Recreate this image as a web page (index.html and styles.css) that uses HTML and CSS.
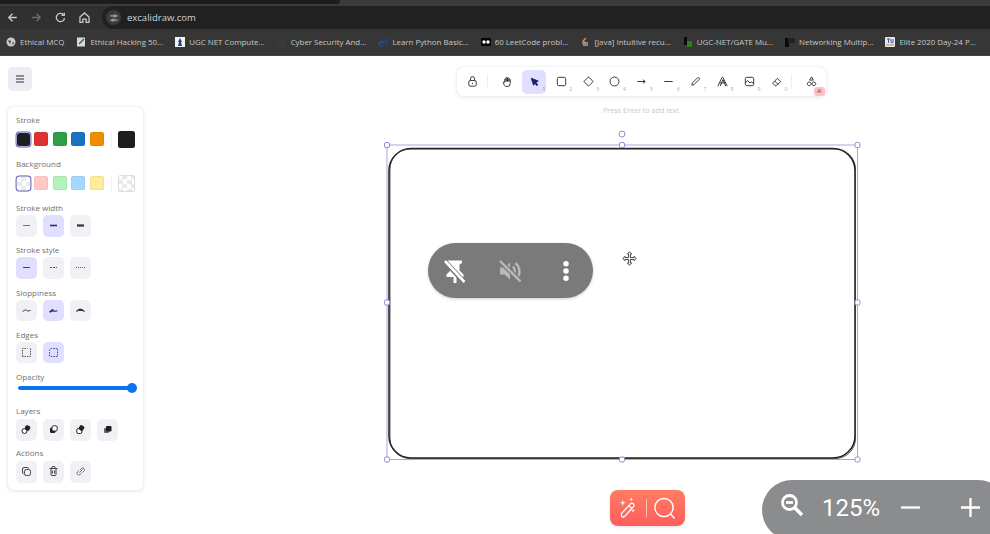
FILE: index.html
```html
<!DOCTYPE html>
<html lang="en">
<head>
<meta charset="utf-8">
<title>excalidraw.com</title>
<link rel="stylesheet" href="styles.css">
</head>
<body>
<div class="browser">
  <div class="tabstrip"><div class="tabstrip-dark"></div></div>
  <div class="toolbar-row">
    <div class="nav">
      <svg class="nav-icon" viewBox="0 0 12 12"><path d="M10 6H2.500M6 2.500 2.500 6 6 9.500"/></svg>
      <svg class="nav-icon dim" viewBox="0 0 12 12"><path d="M2 6h7.500M6 2.500 9.500 6 6 9.500"/></svg>
      <svg class="nav-icon" viewBox="0 0 12 12"><path d="M9.700 6.500A3.800 3.800 0 1 1 8.600 3.300M9.500 1.500v2.500H7"/></svg>
      <svg class="nav-icon" viewBox="0 0 12 12"><path d="M1.800 5.500 6 1.800l4.200 3.700v5H7.500V7.500h-3v3H1.800z"/></svg>
    </div>
    <div class="address">
      <span class="site-chip"><svg viewBox="0 0 12 12"><path d="M1.500 3.500h4M8.500 3.500h2M1.500 8.500h2M6.500 8.500h4"/><circle cx="7" cy="3.500" r="1.300"/><circle cx="5" cy="8.500" r="1.300"/></svg></span>
      <span class="url">excalidraw.com</span>
    </div>
  </div>
  <div class="bookmarks">
    <span class="bm"><svg class="fav" viewBox="0 0 10 10"><circle cx="5" cy="5" r="4.500" fill="#c9c9c9"/><path d="M2 3l3 1-1 3zM6 6l2-1-1 3z" fill="#444"/></svg>Ethical MCQ</span>
    <span class="bm"><svg class="fav" viewBox="0 0 10 10"><rect x="1" y="0.500" width="8" height="9" fill="#d8d8d8"/><path d="M3 7 8 2" stroke="#555" stroke-width="1.500"/></svg>Ethical Hacking 50...</span>
    <span class="bm"><svg class="fav" viewBox="0 0 10 10"><rect width="10" height="10" fill="#f2f2f2"/><path d="M5 1 3 5h1L3 9h4L6 5h1z" fill="#23408e"/></svg>UGC NET Compute...</span>
    <span class="bm"><svg class="fav" viewBox="0 0 10 10"><path d="M2 3h5v7H3a2 2 0 0 1-1-4h5" fill="none" stroke="#3c3c3c" stroke-width="1.500"/></svg>Cyber Security And...</span>
    <span class="bm"><svg class="fav" viewBox="0 0 10 10"><path d="M1 6h5a2.500 2.500 0 1 0-1 2.500" fill="none" stroke="#1d4f91" stroke-width="1.500"/><path d="M8.500 1v6M8.500 8.500v1" stroke="#1d4f91"/></svg>Learn Python Basic...</span>
    <span class="bm"><svg class="fav" viewBox="0 0 10 10"><rect y="1" width="10" height="8" rx="1" fill="#050505"/><circle cx="3" cy="5" r="1.700" fill="#fff"/><circle cx="7" cy="5" r="1.700" fill="#fff"/></svg>60 LeetCode probl...</span>
    <span class="bm"><svg class="fav" viewBox="0 0 10 10"><path d="M2 6h6M3 8h5" stroke="#ddd"/><path d="M6 1 3 4l3 2" fill="none" stroke="#e09a2c" stroke-width="1.200"/></svg>[Java] Intuitive recu...</span>
    <span class="bm"><svg class="fav" viewBox="0 0 10 10"><rect x="1" width="3" height="8" fill="#0c0c0c"/><rect x="4" y="4" width="5" height="6" fill="#2f7d18"/></svg>UGC-NET/GATE Mu...</span>
    <span class="bm"><svg class="fav" viewBox="0 0 10 10"><rect x="0" y="1" width="4" height="9" fill="#0a0a0a"/><rect x="3" y="1" width="7" height="5" fill="#222"/></svg>Networking Multip...</span>
    <span class="bm"><svg class="fav" viewBox="0 0 10 10"><rect width="10" height="10" rx="1" fill="#e8e8e8"/><path d="M2 2h3M3.500 2v4M6 2v3a1 1 0 0 0 2 0V2" fill="none" stroke="#3b5bb5"/><path d="M1 8h8" stroke="#d0852c"/></svg>Elite 2020 Day-24 P...</span>
  </div>
</div>

<main class="canvas">
  <button class="menu-btn" type="button" aria-label="Menu">
    <svg viewBox="0 0 12 12"><path d="M2 3h8M2 6h8M2 9h8"/></svg>
  </button>

  <aside class="panel">
    <section class="group">
      <h3>Stroke</h3>
      <div class="swatches">
        <span class="sw sel" style="--c:#1e1e1e"></span>
        <span class="sw" style="--c:#e03131"></span>
        <span class="sw" style="--c:#2f9e44"></span>
        <span class="sw" style="--c:#1971c2"></span>
        <span class="sw" style="--c:#f08c00"></span>
        <span class="sep"></span>
        <span class="sw big" style="--c:#1e1e1e"></span>
      </div>
    </section>
    <section class="group">
      <h3>Background</h3>
      <div class="swatches">
        <span class="sw sel checker"></span>
        <span class="sw" style="--c:#ffc9c9"></span>
        <span class="sw" style="--c:#b2f2bb"></span>
        <span class="sw" style="--c:#a5d8ff"></span>
        <span class="sw" style="--c:#ffec99"></span>
        <span class="sep"></span>
        <span class="sw big checker"></span>
      </div>
    </section>
    <section class="group">
      <h3>Stroke width</h3>
      <div class="btns">
        <span class="opt"><svg viewBox="0 0 21 21"><path d="M7 10.500h7" stroke="#777" stroke-width="1"/></svg></span>
        <span class="opt on"><svg viewBox="0 0 21 21"><path d="M7 10.500h7" stroke="#2a2a7a" stroke-width="1.600"/></svg></span>
        <span class="opt"><svg viewBox="0 0 21 21"><path d="M7 10.500h7" stroke="#333" stroke-width="2.200"/></svg></span>
      </div>
    </section>
    <section class="group">
      <h3>Stroke style</h3>
      <div class="btns">
        <span class="opt on"><svg viewBox="0 0 21 21"><path d="M7 10.500h7" stroke="#3a3a8a" stroke-width="1"/></svg></span>
        <span class="opt"><svg viewBox="0 0 21 21"><path d="M7 10.500h7" stroke="#555" stroke-width="1" stroke-dasharray="2 1"/></svg></span>
        <span class="opt"><svg viewBox="0 0 21 21"><path d="M6 10.500h9" stroke="#555" stroke-width=".9" stroke-dasharray="1 1"/></svg></span>
      </div>
    </section>
    <section class="group">
      <h3>Sloppiness</h3>
      <div class="btns">
        <span class="opt"><svg viewBox="0 0 21 21"><path d="M6.500 11.500 9.500 9.700 11.500 11 14.500 10.500" fill="none" stroke="#333" stroke-width=".9"/></svg></span>
        <span class="opt on"><svg viewBox="0 0 21 21"><path d="M6.500 12 9.500 9.500 11 11.300 14.500 10.700M7 12.300 10 10.500" fill="none" stroke="#2a2a7a" stroke-width="1.100"/></svg></span>
        <span class="opt"><svg viewBox="0 0 21 21"><path d="M6.500 11.500 9 9.500 11.500 9.500 14.500 11.500M9 10.300h3" fill="none" stroke="#333" stroke-width="1.300"/></svg></span>
      </div>
    </section>
    <section class="group">
      <h3>Edges</h3>
      <div class="btns">
        <span class="opt"><svg viewBox="0 0 21 21"><path d="M6.500 14.500v-8h5M14.500 6.500v8h-8" fill="none" stroke="#444" stroke-width=".9" stroke-dasharray="1.500 1"/></svg></span>
        <span class="opt on"><svg viewBox="0 0 21 21"><path d="M6.500 14v-5.500q0-2 2-2h6v8h-8" fill="none" stroke="#3c3c90" stroke-width=".9" stroke-dasharray="1.500 1"/></svg></span>
      </div>
    </section>
    <section class="group opacity">
      <h3>Opacity</h3>
      <div class="slider"><span class="thumb"></span></div>
    </section>
    <section class="group layers">
      <h3>Layers</h3>
      <div class="btns">
        <span class="opt"><svg viewBox="0 0 21 21"><circle cx="8.500" cy="12" r="2.500" fill="#fff" stroke="#222"/><rect x="9" y="6.500" width="5" height="5" rx="1.500" fill="#222" transform="rotate(20 11.500 9)"/></svg></span>
        <span class="opt"><svg viewBox="0 0 21 21"><rect x="7" y="8.500" width="5.500" height="5.500" rx="1.500" fill="#222"/><rect x="9" y="6.800" width="5.200" height="5.200" rx="1.500" fill="#fff" stroke="#222"/></svg></span>
        <span class="opt"><svg viewBox="0 0 21 21"><rect x="6.800" y="9.500" width="5" height="5" rx="1.500" fill="#fff" stroke="#222"/><rect x="9" y="6.500" width="5" height="5" rx="1.500" fill="#222" transform="rotate(30 11.500 9)"/></svg></span>
        <span class="opt"><svg viewBox="0 0 21 21"><rect x="7" y="9" width="5" height="5" rx="1" fill="#666"/><rect x="9" y="7" width="5.500" height="5.500" rx="1" fill="#1c1c1c"/></svg></span>
      </div>
    </section>
    <section class="group actions">
      <h3>Actions</h3>
      <div class="btns">
        <span class="opt"><svg viewBox="0 0 21 21" fill="none" stroke="#333" stroke-width=".9"><rect x="8.500" y="8.500" width="6" height="6" rx="1.800"/><path d="M7.800 12.500h-.6Q6.500 12.500 6.500 11V8q0-1.500 1.500-1.500h3q1.500 0 1.500 1"/></svg></span>
        <span class="opt"><svg viewBox="0 0 21 21" fill="none" stroke="#333" stroke-width=".9"><path d="M6.500 7.500h8M8 7.500v6q0 1 1 1h3q1 0 1-1v-6M9 7.500V6q0-.5.500-.5h2q.5 0 .5.500v1.500M9.500 9.500v3M11.500 9.500v3"/></svg></span>
        <span class="opt"><svg viewBox="0 0 21 21" fill="none" stroke="#555" stroke-width=".8"><path d="M9.500 11.500l3-3M9 9.500 7.300 11.200a1.800 1.800 0 0 0 2.500 2.500L11.500 12M10 9 11.700 7.300a1.800 1.800 0 0 1 2.500 2.500L12.500 11.500"/></svg></span>
      </div>
    </section>
  </aside>

  <nav class="tools">
    <span class="tool"><svg viewBox="0 0 14 14"><rect x="3" y="6" width="8" height="6" rx="1.500"/><path d="M4.800 6V4a2.200 2.200 0 0 1 4.400 0v2M7 8.500v1.300"/></svg></span>
    <span class="tool-sep"></span>
    <span class="tool"><svg viewBox="0 0 14 14"><path d="M4 8V4.500a.8.800 0 0 1 1.500 0V7V3a.8.800 0 0 1 1.500 0v4V3.500a.8.800 0 0 1 1.500 0V7V5a.8.800 0 0 1 1.500 0v4q0 3.500-3.500 3.500-2 0-3-1.500L2.500 8.500c-.5-1 .8-1.700 1.500-.5z"/></svg></span>
    <span class="tool active"><svg viewBox="0 0 14 14"><path class="fill-navy" d="M3.500 3.500 11 6.500 8.500 8l2 2.500-1 1L7.500 9 6 11z"/></svg><i>1</i></span>
    <span class="tool"><svg viewBox="0 0 14 14"><rect x="2.500" y="2.500" width="9" height="9" rx="1.500"/></svg><i>2</i></span>
    <span class="tool"><svg viewBox="0 0 14 14"><path d="M7 2l5 5-5 5-5-5z" stroke-linejoin="round"/></svg><i>3</i></span>
    <span class="tool"><svg viewBox="0 0 14 14"><circle cx="7" cy="7" r="4.800"/></svg><i>4</i></span>
    <span class="tool"><svg viewBox="0 0 14 14"><path d="M2.500 7h8.500M8.500 5l2.500 2-2.500 2"/></svg><i>5</i></span>
    <span class="tool"><svg viewBox="0 0 14 14"><path d="M2.500 7h9"/></svg><i>6</i></span>
    <span class="tool"><svg viewBox="0 0 14 14"><path d="M3 11l.7-2.500 5.500-5.500a1.300 1.300 0 0 1 1.800 1.800L5.500 10.300z"/></svg><i>7</i></span>
    <span class="tool"><svg viewBox="0 0 14 14"><path d="M2 12 6.500 2.500h1L12 12M4 8.500h6M4.500 12 7.500 5l3 7"/></svg><i>8</i></span>
    <span class="tool"><svg viewBox="0 0 14 14"><rect x="2.500" y="2.500" width="9" height="9" rx="1.500"/><path d="M2.500 8.500 5 6l2.500 2.500 1.500-1 2.500 1.500M5.500 4.500h.1"/></svg><i>9</i></span>
    <span class="tool"><svg viewBox="0 0 14 14"><path d="M5.500 11.500 2.800 8.800 8 3.500l3.500 3.500-4.500 4.500zM5 6.500 9 10.500"/></svg><i>0</i></span>
    <span class="tool-sep"></span>
    <span class="tool"><svg viewBox="0 0 14 14"><path d="M7 2 9 5.500H5zM4.500 7.500a2 2 0 1 0 .1 0zM9.500 7.500a2 2 0 1 0 .1 0z"/></svg><b class="ai">AI</b></span>
  </nav>
  <p class="hint">Press Enter to add text</p>

  <svg class="drawing" viewBox="0 0 490 350" aria-hidden="true">
    <rect class="shape" x="11" y="14.500" width="466" height="309.500" rx="22"/>
    <rect class="shape-shadow" x="12" y="15" width="465.500" height="309.500" rx="20"/>
    <rect class="sel-box" x="9" y="11" width="470.500" height="314.500"/>
    <circle class="handle" cx="244" cy="0" r="3"/>
    <rect class="handle" x="6.500" y="8.500" width="5" height="5" rx="1.500"/>
    <rect class="handle" x="241.500" y="8.500" width="5" height="5" rx="1.500"/>
    <rect class="handle" x="477" y="8.500" width="5" height="5" rx="1.500"/>
    <rect class="handle" x="6.500" y="166" width="5" height="5" rx="1.500"/>
    <rect class="handle" x="477" y="166" width="5" height="5" rx="1.500"/>
    <rect class="handle" x="6.500" y="323" width="5" height="5" rx="1.500"/>
    <rect class="handle" x="241.500" y="323" width="5" height="5" rx="1.500"/>
    <rect class="handle" x="477" y="323" width="5" height="5" rx="1.500"/>
  </svg>

  <svg class="move-cursor" viewBox="0 0 16 16" aria-hidden="true">
    <path d="M8 .8 10.300 3.300H9v3.700h3.700V5.700L15.200 8l-2.500 2.300V9H9v3.700h1.300L8 15.200l-2.300-2.500H7V9H3.300v1.300L.8 8l2.500-2.300V7H7V3.300H5.700z"/>
  </svg>

  <div class="float-pill">
    <svg class="pill-icon" viewBox="0 0 24 24"><path d="M5 1.500h14v2.500l-2.500 1.500v6l4 4v2.500h-7V24h-3v-6H3.500v-2.500l4-4v-6L5 4z" fill="#fff"/><path d="M1 1.500 21 23" stroke="#7a7a7a" stroke-width="5"/><path d="M2 2l19.500 21" stroke="#fff" stroke-width="2.600"/></svg>
    <svg class="pill-icon" viewBox="0 0 24 24"><path d="M2 8.500h4.500L12 3.500v17l-5.500-5H2z" fill="#b9b9b9"/><path d="M15 7.500a6.500 6.500 0 0 1 0 9M17.500 4a11 11 0 0 1 2.500 14" fill="none" stroke="#b9b9b9" stroke-width="2.400"/><path d="M1.500 1.500l21 21" stroke="#7a7a7a" stroke-width="5"/><path d="M2 2l20.500 20.500" stroke="#b9b9b9" stroke-width="2.400"/></svg>
    <svg class="pill-icon dots" viewBox="0 0 8 24"><circle cx="4" cy="4" r="3" fill="#fff"/><circle cx="4" cy="12" r="3" fill="#fff"/><circle cx="4" cy="20" r="3" fill="#fff"/></svg>
  </div>

  <div class="magic">
    <svg class="magic-wand" viewBox="0 0 24 24"><path d="M4.500 21.500c-1.300-1.200-1-2.500-.5-3.700L13.500 7.500c1.500-1.500 4-.5 4 1.500 0 .8-.3 1.300-1 2L7.500 21c-1 .8-2 1.200-3 .5zM12 9.500l3 3"/><path class="spark" d="M5.500 3.500 6.500 7 10 8 6.500 9 5.500 12.500 4.500 9 1 8 4.500 7zM17 .5l.7 2 2 .7-2 .7-.7 2-.7-2-2-.7 2-.7zM19.500 16l.7 2 2 .7-2 .7-.7 2-.7-2-2-.7 2-.7z" transform="scale(.8) translate(1 0)"/></svg>
    <span class="magic-sep"></span>
    <svg class="magic-search" viewBox="0 0 24 24"><circle cx="11.500" cy="11.500" r="9.500"/><path d="M18.500 18.500 22.500 23"/></svg>
  </div>

  <div class="zoom-pill">
    <svg class="zoom-glass" viewBox="0 0 24 24"><circle cx="9.500" cy="9.500" r="7"/><path d="M6 9.500h7"/><path class="thick" d="M15 15l7 7"/></svg>
    <span class="zoom-val">125%</span>
    <svg class="zoom-op" viewBox="0 0 22 22"><path d="M1 11h20"/></svg>
    <svg class="zoom-op" viewBox="0 0 22 22"><path d="M1 11h20M11 1v20"/></svg>
  </div>
</main>
</body>
</html>
```
FILE: styles.css
```css
* { box-sizing: border-box; }
html, body { margin: 0; height: 100%; }
body { width: 990px; height: 534px; overflow: hidden; background: #fff; font-family: "Open Sans", "Noto Sans", sans-serif; display: flex; flex-direction: column; }

/* browser chrome */
.browser { flex: 0 0 56px; background: #333; display: flex; flex-direction: column; }
.tabstrip { height: 6px; background: #3b3b3b; }
.tabstrip-dark { width: 340px; height: 4px; background: #1d1d1d; border-radius: 0 0 6px 0; }
.toolbar-row { height: 23px; display: flex; align-items: center; background: #303030; }
.nav { width: 102px; padding-left: 6px; display: flex; gap: 11px; flex: none; }
.nav-icon { width: 13px; height: 13px; fill: none; stroke: #c9c9c9; stroke-width: 1.200; flex: none; }
.nav-icon.dim { stroke: #6c6c6c; }
.address { flex: 1; height: 23px; background: #212121; border-radius: 12px 0 0 12px; display: flex; align-items: center; padding-left: 4px; gap: 6px; }
.site-chip { width: 15px; height: 15px; background: #3c3c3c; border-radius: 50%; display: flex; align-items: center; justify-content: center; }
.site-chip svg { width: 10px; height: 10px; fill: none; stroke: #d5d5d5; stroke-width: 1; }
.url { font: 9.500px "Open Sans", sans-serif; color: #d4d4d4; }
.bookmarks { height: 27px; background: #363636; border-bottom: 1px solid #444; padding: 0 0 0 6px; display: flex; align-items: center; gap: 12px; white-space: nowrap; overflow: hidden; }
.bm { display: flex; align-items: center; gap: 4px; font: 7.900px "Open Sans", sans-serif; color: #c8c8c8; flex: none; }
.fav { width: 10px; height: 10px; flex: none; }

/* canvas */
.canvas { position: relative; flex: 1; background: #fff; overflow: hidden; }
.menu-btn { position: absolute; left: 8px; top: 11px; width: 24px; height: 24px; padding: 0; border: 0; border-radius: 5px; background: #ececf4; display: flex; align-items: center; justify-content: center; }
.menu-btn svg { width: 12px; height: 12px; fill: none; stroke: #333; stroke-width: 1.100; }

.panel { position: absolute; left: 8px; top: 51px; width: 135px; height: 383px; padding: 8px 8px; background: #fff; border-radius: 5px; box-shadow: 0 0 1px rgba(0,0,0,.16), 0 1px 5px rgba(0,0,0,.1); display: flex; flex-direction: column; }
.group { height: 42.300px; flex: none; }
.group:nth-child(1), .group:nth-child(2) { height: 44px; }
.group h3 { margin: 0; height: 12px; font: 400 8px/10px "Open Sans", sans-serif; color: #6f6f6f; }
.group.opacity { height: 34px; }
.group.layers { height: 42px; }

.swatches { display: flex; align-items: center; gap: 4.500px; height: 17px; margin-top: 3.500px; }
.sw { width: 14px; height: 14px; flex: none; border-radius: 2.500px; background: var(--c); box-shadow: inset 0 0 0 .5px rgba(0,0,0,.1); }
.sw.sel { width: 13px; height: 13px; margin: 0 -.500px 0 1px; box-shadow: 0 0 0 .4px #fff, 0 0 0 1.400px #5b57b5; }
.sw.checker { background: conic-gradient(#e9e9e9 25%, #fff 0 50%, #e9e9e9 0 75%, #fff 0) 0 0 / 9px 9px; box-shadow: inset 0 0 0 1px #ddd; }
.sw.sel.checker { box-shadow: 0 0 0 .4px #fff, 0 0 0 1.400px #5b57b5; }
.sw.big { width: 17px; height: 17px; margin-left: 1.500px; }
.sep { width: 1px; height: 17px; background: #f0f0f3; margin-left: 2.500px; flex: none; }

.btns { display: flex; gap: 6px; }
.layers .btns, .actions .btns { margin-top: 1px; }
.opt { width: 21px; height: 21.500px; flex: none; border-radius: 5px; background: #f1f0f4; display: block; }
.opt.on { background: #e0dfff; }
.opt svg { display: block; width: 21px; height: 21px; }

.slider { position: relative; width: 116px; height: 4px; margin: 2px 0 0 2px; border-radius: 2px; background: #0a74ef; }
.thumb { position: absolute; right: -3px; top: -3px; width: 10px; height: 10px; border-radius: 50%; background: #0a74ef; }

/* top tools */
.tools { position: absolute; left: 457px; top: 11px; width: 369px; height: 29px; background: #fff; border-radius: 6px; box-shadow: 0 0 1px rgba(0,0,0,.14), 0 1px 5px rgba(0,0,0,.1); display: flex; align-items: center; justify-content: flex-start; padding-left: 3px; }
.tool { position: relative; width: 24px; height: 24px; flex: none; margin-right: 2.900px; border-radius: 5px; display: flex; align-items: center; justify-content: center; }
.tool svg { width: 13px; height: 13px; fill: none; stroke: #2c2c2c; stroke-width: 1; }
.tool.active { background: #e0dfff; }
.tool .fill-navy { fill: #1c1c6e; stroke: #1c1c6e; }
.tool i { position: absolute; right: 1px; bottom: 2px; font: normal 5px/6px "Open Sans", sans-serif; color: #aaa; }
.tool.active i { color: #777; }
.tool-sep { width: 1px; height: 15px; background: #eeeeee; flex: none; margin: 0 7.500px 0 0; }
.ai { position: absolute; right: -1px; bottom: -2px; width: 11px; height: 9px; border-radius: 3px; background: #ffc0c6; font: 500 5px/9px "Open Sans", sans-serif; color: #5a3a3a; text-align: center; }
.hint { position: absolute; left: 541px; width: 200px; top: 49px; margin: 0; text-align: center; font: 7.200px/10px "Open Sans", sans-serif; color: #c8c8c8; }

/* drawing */
.drawing { position: absolute; left: 378px; top: 78px; width: 490px; height: 350px; overflow: visible; }
.shape { fill: #fff; stroke: #1e1e1e; stroke-width: 1.500; }
.shape-shadow { fill: none; stroke: #333; stroke-width: .8; }
.sel-box { fill: none; stroke: #a9a5e3; stroke-width: 1; }
.handle { fill: #fff; stroke: #8f8bd6; stroke-width: 1; }
.move-cursor { position: absolute; left: 622px; top: 195px; width: 15px; height: 15px; fill: #fff; stroke: #222; stroke-width: .9; }

.float-pill { position: absolute; left: 428px; top: 187px; width: 165px; height: 55px; border-radius: 28px; background: #7a7a7a; box-shadow: 0 1px 3px rgba(0,0,0,.2); display: flex; align-items: center; padding-left: 15px; gap: 31px; }
.pill-icon { width: 24px; height: 26px; flex: none; }
.pill-icon.dots { width: 8px; height: 22px; margin-left: 9px; }

.magic { position: absolute; left: 610px; top: 434px; width: 75px; height: 36px; border-radius: 8px; background: linear-gradient(#ff7c62, #ff5d5d); box-shadow: 0 1px 3px rgba(0,0,0,.12); display: flex; align-items: center; padding-left: 8px; gap: 6px; }
.magic-wand { width: 22px; height: 22px; flex: none; fill: none; stroke: #fff; stroke-width: 1.400; }
.magic-wand .spark { fill: #fff; stroke: none; }
.magic-sep { width: 1px; height: 18px; background: rgba(255,255,255,.6); flex: none; }
.magic-search { width: 23px; height: 24px; flex: none; fill: none; stroke: #fff; stroke-width: 1.500; }

.zoom-pill { position: absolute; left: 762px; top: 424px; width: 246px; height: 60px; border-radius: 30px; background: #8b8c8e; display: flex; align-items: flex-start; padding: 13px 0 0 18px; }
.zoom-glass { width: 24px; height: 24px; flex: none; fill: none; stroke: #fff; stroke-width: 2.800; }
.zoom-glass .thick { stroke-width: 3.500; }
.zoom-val { margin: 1px 0 0 18px; width: 60px; font: 400 24px/28px Roboto, sans-serif; color: #fff; flex: none; }
.zoom-op { width: 21px; height: 21px; margin: 4px 0 0 18px; flex: none; fill: none; stroke: #fff; stroke-width: 2.400; }
.zoom-op + .zoom-op { margin-left: 39px; }
```
